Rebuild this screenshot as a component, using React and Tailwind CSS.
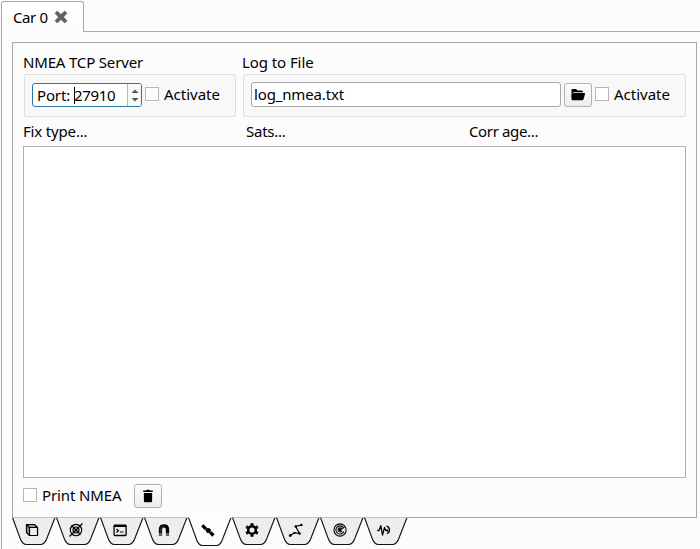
import React from 'react';

const label = 'block whitespace-nowrap pb-[2px] text-[15px] leading-[16px] text-black';

function Check() {
  return <span className="block h-[14px] w-[14px] shrink-0 border border-[#b6b6b6] bg-white" />;
}

function ToolButton({ children }) {
  return (
    <button className="flex h-6 w-7 shrink-0 items-center justify-center rounded-[3px] border border-[#b0b0b0] bg-linear-to-b from-[#fdfdfd] to-[#ededed]">
      {children}
    </button>
  );
}

const icons = [
  <g key="cube" fill="none" stroke="#000" strokeWidth="1.2" strokeLinejoin="round">
    <path d="M2 2H10L13 5V13H5L2 10Z" fill="#999" />
    <path d="M5 5H13V13H5Z" fill="#eee" />
    <path d="M2 2L5 5" />
  </g>,
  <g key="orbit" fill="none" stroke="#000" strokeWidth="1.15">
    <circle cx="7.5" cy="7.5" r="5.7" />
    <circle cx="7.5" cy="7.5" r="3" />
    <path d="M1 14L14 1M3 3L12 12" />
    <circle cx="7.5" cy="7.5" r=".8" fill="#000" />
  </g>,
  <g key="terminal" fill="none" stroke="#000" strokeWidth="1.3">
    <rect x="1.6" y="2.6" width="12" height="10.4" rx=".7" />
    <path d="M1.5 3.5H13.5" strokeWidth="2" />
    <path d="M4 6.5L6 8.2L4 10M7.5 9.5H11" strokeWidth="1.2" />
  </g>,
  <g key="magnet" fill="none" stroke="#000" strokeWidth="3.3">
    <path d="M4 10.5V7Q4 3.3 7.5 3.3T11 7V10.5" />
    <path d="M4 10.5V13.5M11 10.5V13.5" stroke="#666" />
    <path d="M4.5 10V6.8Q4.7 4 7.2 3.2" stroke="#999" strokeWidth=".5" />
  </g>,
  <g key="satellite" stroke="#000" fill="#000">
    <path d="M1.8 2.8L5.4 6.4M9.8 9.8L13 13" strokeWidth="3.2" />
    <path d="M5 6L10 10" strokeWidth="1.5" />
    <circle cx="7.7" cy="8" r="2.1" />
    <path d="M7 10L10 6.5" strokeWidth="1" />
  </g>,
  <g key="gear" fill="none" stroke="#000">
    <circle cx="7.5" cy="7.5" r="3.8" strokeWidth="2.5" />
    <path d="M7.5 .8V3M7.5 12V14.2M1.7 4.15L3.6 5.25M11.4 9.75L13.3 10.85M1.7 10.85L3.6 9.75M11.4 5.25L13.3 4.15" strokeWidth="3" />
  </g>,
  <g key="route" fill="none" stroke="#000" strokeWidth="1.2">
    <path d="M1.8 13L6 10.2L11 11L7.2 4L13 2.5" />
    <g fill="#000" stroke="none">
      <circle cx="1.8" cy="13" r="1.4" />
      <circle cx="6" cy="10.4" r="1" />
      <circle cx="11" cy="11" r="1.3" />
      <circle cx="7.2" cy="4" r="1.2" />
      <circle cx="12.9" cy="2.5" r="1.3" />
    </g>
  </g>,
  <g key="radar" fill="none" stroke="#000" strokeWidth="1.1">
    <circle cx="7.5" cy="7.5" r="6.1" />
    <path d="M10.8 5A4.1 4.1 0 1 0 11.3 9M9 6A2 2 0 1 0 9.4 8.2" />
    <path d="M7.5 7.5L12 4.5" />
    <circle cx="7.5" cy="7.5" r=".9" fill="#000" />
  </g>,
  <g key="pulse" fill="none" stroke="#000" strokeWidth="1.3">
    <path d="M.8 8H2.5L4.3 3.2L6 12.5L8 5L9.3 8H11.5" strokeLinejoin="round" />
    <path d="M10 3.6A4 4 0 0 1 10.4 11.2" />
    <circle cx="11" cy="8" r="1" fill="#000" stroke="none" />
  </g>,
];

function BottomTab({ icon, active }) {
  return (
    <div className="h-[32px] w-[44px] shrink-0">
      <svg className="block overflow-visible" width="44" height="32" viewBox="0.5 0 44 32">
        <path
          d={active ? 'M0 .5L7.5 21C9 26 10.5 28.5 14 28.5H28C31.5 28.5 33 26 34.5 21L42.5 .5Z' : 'M0 .5L7.5 21C9 25.5 10.5 27.5 14 27.5H28C31.5 27.5 33 25.5 34.5 21L42.5 .5Z'}
          fill={active ? '#fefefe' : '#eeeeee'}
        />
        <path
          d={active ? 'M0 .5L7.5 21C9 26 10.5 28.5 14 28.5H28C31.5 28.5 33 26 34.5 21L42.5 .5' : 'M0 .5L7.5 21C9 25.5 10.5 27.5 14 27.5H28C31.5 27.5 33 25.5 34.5 21L42.5 .5'}
          fill="none"
          stroke="#111"
          strokeWidth="1.1"
        />
        <path d="M0 .5H43" stroke={active ? '#fefefe' : '#c4c4c4'} />
        <g transform="translate(12 5.5)">{icon}</g>
      </svg>
    </div>
  );
}

export default function App() {
  return (
    <div className="flex h-[549px] w-[700px] flex-col overflow-hidden bg-[#fcfcfc] pl-px font-['Noto_Sans','Open_Sans',sans-serif]">
      <div className="flex h-8 shrink-0 pt-px">
        <div className="flex w-[83px] items-start rounded-t-[3px] border-x border-t border-[#a9a9a9] bg-linear-to-b from-white to-[#fcfcfc] pl-[11px] pt-[7px]">
          <span className={`${label} w-[41px] tracking-[-0.4px]`}>Car 0</span>
          <svg className="mt-px" width="14" height="14" viewBox="0 0 14 14">
            <path d="M3.3 1L7 4.4L10.7 1L13 3.3L9.5 7L13 10.7L10.7 13L7 9.6L3.3 13L1 10.7L4.5 7L1 3.3Z" fill="#606060" stroke="#484848" strokeWidth=".5" />
          </svg>
        </div>
        <div className="flex-1 border-b border-[#a9a9a9]" />
      </div>
      <div className="flex min-h-0 flex-1 flex-col border-l border-[#a9a9a9] pl-[10px] pt-[10px]">
        <main className="flex h-[476px] w-[685px] shrink-0 flex-col border border-[#a9a9a9] px-[10px] pt-[11px]">
          <div className="flex gap-[7px]">
            <section className="w-[213px]">
              <h2 className={`${label} tracking-[-0.17px]`}>NMEA TCP Server</h2>
              <div className="ml-px mt-[2px] flex h-[43px] items-start rounded-[2px] border border-[#dedede] bg-[#f8f8f8] pl-[7px] pt-2">
                <div className="flex h-6 w-[110px] shrink-0 overflow-hidden rounded-[3px] border border-[#2a76a5] bg-white">
                  <div className="flex flex-1 items-start pl-1 pt-[3px]">
                    <span className={`${label} w-[37px] tracking-[-0.15px]`}>Port: </span>
                    <span className="h-[17px] w-px shrink-0 bg-black" />
                    <span className={`${label} -ml-px tracking-[-0.3px]`}>27910</span>
                  </div>
                  <div className="flex w-[14px] flex-col items-center justify-center gap-[5px] border-l border-[#b8b8b8] bg-[#f8f8f8]">
                    <svg width="8" height="4" viewBox="0 0 8 4"><path d="M.5 4L4 .4L7.5 4Z" fill="#555" /></svg>
                    <svg width="8" height="4" viewBox="0 0 8 4"><path d="M.5 0L4 3.6L7.5 0Z" fill="#555" /></svg>
                  </div>
                </div>
                <div className="ml-[3px] mt-1"><Check /></div>
                <span className={`${label} ml-[5px] mt-[3px]`}>Activate</span>
              </div>
            </section>
            <section className="flex-1">
              <h2 className={`${label} -ml-px tracking-[-0.08px]`}>Log to File</h2>
              <div className="mt-[2px] flex h-[43px] items-start rounded-[2px] border border-[#dedede] bg-[#f8f8f8] pl-[7px] pt-[7px]">
                <div className="h-[25px] w-[310px] rounded-[3px] border border-[#a8a8a8] bg-white pl-[2px] pt-[3px]">
                  <span className={`${label} tracking-[-0.15px]`}>log_nmea.txt</span>
                </div>
                <div className="ml-[3px] mt-px">
                  <ToolButton>
                    <svg width="16" height="14" viewBox="0 0 16 14">
                      <path d="M1.5 2Q1.5 1 2.5 1H6L7.5 2.5H12Q13 2.5 13 4.3H4Q3 4.3 2.7 5.3L1.5 10Z" />
                      <path d="M3.7 5H14.4Q15.2 5 15 6L13.6 11Q13.3 12.2 12 12.2H2.7Q1.7 12.2 1.5 11V7.3Q2.5 5 3.7 5Z" />
                    </svg>
                  </ToolButton>
                </div>
                <div className="ml-[3px] mt-[5px]"><Check /></div>
                <span className={`${label} ml-[5px] mt-1`}>Activate</span>
              </div>
            </section>
          </div>
          <div className="mt-[6px] grid h-[23px] grid-cols-[223px_223px_1fr]">
            <span className={`${label} tracking-[-0.17px]`}>Fix type...</span>
            <span className={`${label} tracking-[-0.25px]`}>Sats...</span>
            <span className={`${label} tracking-[-0.36px]`}>Corr age...</span>
          </div>
          <div className="h-[332px] w-[663px] shrink-0 border border-[#b0b0b0] bg-white" />
          <div className="flex pt-[6px]">
            <div className="mt-1"><Check /></div>
            <span className={`${label} ml-[5px] mt-[3px] w-[92px] tracking-[-0.12px]`}>Print NMEA</span>
            <ToolButton>
              <svg width="12" height="14" viewBox="0 0 12 14">
                <path d="M1.2 1.5H4L4.7.7H7.3L8 1.5H10.8V3H1.2ZM1.9 4H10.1V12Q10.1 13.3 9 13.3H3Q1.9 13.3 1.9 12Z" />
              </svg>
            </ToolButton>
          </div>
        </main>
        <nav className="-mt-px ml-px flex">
          {icons.map((icon, i) => <BottomTab key={i} icon={icon} active={i === 4} />)}
        </nav>
      </div>
    </div>
  );
}
